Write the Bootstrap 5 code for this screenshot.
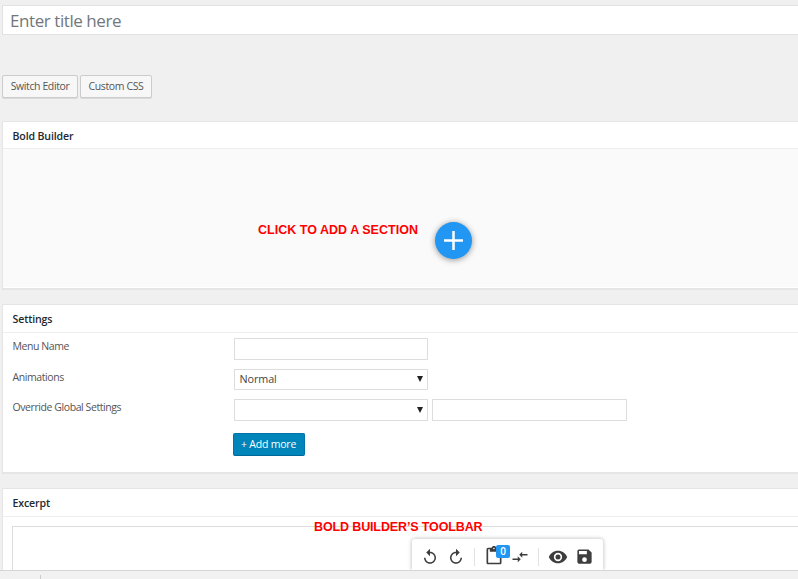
<!DOCTYPE html>
<html lang="en">
<head>
<meta charset="utf-8">
<meta name="viewport" content="width=device-width, initial-scale=1">
<title>Bold Builder</title>
<link href="https://cdn.jsdelivr.net/npm/bootstrap@5.3.0/dist/css/bootstrap.min.css" rel="stylesheet">
<style>
body{font-family:"Open Sans","Noto Sans",sans-serif;font-size:10.5px;line-height:16px;color:#555;background:#f0f0f0;height:579px;letter-spacing:-.42px}
.page-main{height:570px;padding:5px 0 0 2px}
.title-field{height:30px;min-height:0;border:1px solid #e2e2e2;border-right:0;padding:0 7px;font-size:17px;line-height:28px;letter-spacing:-.43px;color:#72777c}
.title-field::placeholder{color:#72777c}
.tool-row{margin-top:40px;gap:2px}
.tool-row .btn{height:23px;padding:0;font-size:10.5px;line-height:21px;letter-spacing:-.39px;color:#555;background:#f7f7f7;border:1px solid #ccc;border-radius:2px;box-shadow:0 1px 0 #dadada}
.btn-switch{width:76px}.btn-css{width:72px}
.panel{background:#fff;border:1px solid #e5e5e5;border-right:0;box-shadow:0 1px 1px rgba(0,0,0,.04)}
.panel-head{height:28px;border-bottom:1px solid #eee;padding-left:9.5px;line-height:28px;font-size:10.6px;font-weight:600;color:#23282d;letter-spacing:-.15px}
.panel-builder{margin-top:23px;height:168px}
.panel-builder .panel-head{height:27px}
.canvas{height:138px;background:#fafafa;padding-left:255px}
.note{font-family:"Liberation Sans",Arial,sans-serif;font-size:12.5px;line-height:14px;font-weight:700;color:#f00;white-space:nowrap}
.note-add{margin-top:74px;width:177px;letter-spacing:.02px}
.add-btn{width:37px;height:37px;margin-top:73px;background:#2196f3;box-shadow:0 1px 6px rgba(0,0,0,.42)}
.panel-settings{margin-top:15px;height:169px}
.form-area{padding:5px 0 0 9.5px}
.setting{height:30.6px}
.setting-name{width:221px;line-height:17px}
.field{width:194.500px;height:21.500px;min-height:0;border:1px solid #ddd;border-radius:0;padding:0 5px;font-size:10.8px;line-height:20px;letter-spacing:-.1px;color:#444;background:#fff}
.field-caret{width:6px;height:6px;margin-right:-1px}
.add-more{width:72px;height:23px;margin:3px 0 0 220px;padding:0;font-size:10.5px;line-height:21px;letter-spacing:-.2px;color:#fff;background:#0085ba;border:1px solid #0073aa;border-radius:2px;border-bottom-color:#006799}
.panel-excerpt{margin-top:15px;height:82px;border-bottom:0;box-shadow:none}
.excerpt-box{margin:9px 0 0 9px;height:44px;border:1px solid #ddd;border-right:0;border-bottom:0}
.foot{height:9px;border-top:1px solid #d5d5d5;background:#f1f1f1}
.foot-tick{width:1px;height:4px;margin:4px 0 0 40px;background:#ccc}
.note-toolbar{left:314px;top:520px;letter-spacing:-.13px}
.builder-toolbar{left:412px;top:539px;width:191px;height:31px;background:#fff;border-radius:3px 3px 0 0;box-shadow:0 0 4px rgba(0,0,0,.3);clip-path:inset(-6px -6px 0 -6px)}
.builder-toolbar svg{display:block;fill:#3d3d3d;margin-top:4px}
.icon-undo,.icon-clip,.icon-fit{margin-left:9px}
.icon-redo{margin-left:8px}
.builder-toolbar .icon-clip{margin-top:3px}
.icon-fit,.icon-save{margin-left:7px}
.icon-eye{margin-left:9px}
.clip-count{left:496px;top:545px;width:14px;height:13px;background:#2196f3;color:#fff;font-size:10px;line-height:13px;border-radius:2px;letter-spacing:0;font-weight:600}
.divider{width:1px;height:18px;background:#e2e2e2;margin:5px 0 0 9px}
</style>
<script src="https://cdn.jsdelivr.net/npm/bootstrap@5.3.0/dist/js/bootstrap.bundle.min.js"></script>
</head>
<body class="overflow-hidden position-relative">
<main class="page-main">
  <input class="form-control rounded-0 title-field" type="text" placeholder="Enter title here" aria-label="Title">
  <div class="tool-row d-flex">
    <button class="btn btn-switch">Switch Editor</button>
    <button class="btn btn-css">Custom CSS</button>
  </div>
  <section class="panel panel-builder">
    <div class="panel-head">Bold Builder</div>
    <div class="canvas d-flex align-items-start">
      <div class="note note-add">CLICK TO ADD A SECTION</div>
      <button class="add-btn btn rounded-circle border-0 p-0 d-flex align-items-center justify-content-center" aria-label="Add section">
        <svg width="19" height="19" viewBox="0 0 19 19" fill="none" stroke="#fff" stroke-width="2.5"><path d="M9.5 0v19M0 9.5h19"/></svg>
      </button>
    </div>
  </section>
  <section class="panel panel-settings">
    <div class="panel-head">Settings</div>
    <div class="form-area">
      <div class="setting d-flex">
        <div class="setting-name">Menu Name</div>
        <input class="form-control field" type="text" aria-label="Menu Name">
      </div>
      <div class="setting d-flex">
        <div class="setting-name">Animations</div>
        <div class="field d-flex align-items-center justify-content-between"><span>Normal</span><svg class="field-caret" viewBox="0 0 6 6"><path d="M0 0h6L3 6z" fill="#222"/></svg></div>
      </div>
      <div class="setting d-flex">
        <div class="setting-name">Override Global Settings</div>
        <div class="field d-flex align-items-center justify-content-end"><svg class="field-caret" viewBox="0 0 6 6"><path d="M0 0h6L3 6z" fill="#222"/></svg></div>
        <input class="form-control field ms-1" type="text" aria-label="Value">
      </div>
      <button class="btn add-more">+ Add more</button>
    </div>
  </section>
  <section class="panel panel-excerpt">
    <div class="panel-head">Excerpt</div>
    <div class="excerpt-box"></div>
  </section>
</main>
<footer class="foot d-flex"><div class="foot-tick"></div></footer>
<div class="note note-toolbar position-absolute">BOLD BUILDER’S TOOLBAR</div>
<div class="builder-toolbar position-absolute d-flex align-items-center">
  <svg class="icon-undo" width="18" height="18" viewBox="0 0 24 24"><path d="M12 5V1L7 6l5 5V7c3.300 0 6 2.700 6 6s-2.700 6-6 6-6-2.700-6-6H4c0 4.400 3.600 8 8 8s8-3.600 8-8-3.600-8-8-8z"/></svg>
  <svg class="icon-redo" width="18" height="18" viewBox="0 0 24 24"><path d="M12 5V1l5 5-5 5V7c-3.300 0-6 2.700-6 6s2.700 6 6 6 6-2.700 6-6h2c0 4.400-3.600 8-8 8s-8-3.600-8-8 3.600-8 8-8z"/></svg>
  <span class="divider"></span>
  <svg class="icon-clip" width="20" height="20" viewBox="0 0 24 24"><path d="M19 2h-4.200C14.400.800 13.300 0 12 0S9.600.800 9.200 2H5c-1.100 0-2 .900-2 2v16c0 1.100.900 2 2 2h14c1.100 0 2-.900 2-2V4c0-1.100-.900-2-2-2zm-7 0c.600 0 1 .400 1 1s-.400 1-1 1-1-.400-1-1 .400-1 1-1zm7 18H5V4h2v3h10V4h2z"/></svg>
  <svg class="icon-fit" width="18" height="18" viewBox="0 0 24 24"><path d="M9.010 14H2v2h7.010v3L13 15l-3.990-4v3zm5.980-1v-3H22V8h-7.010V5L11 9l3.990 4z"/></svg>
  <span class="divider"></span>
  <svg class="icon-eye" width="20" height="20" viewBox="0 0 24 24"><path d="M12 4.500C7 4.500 2.730 7.610 1 12c1.730 4.390 6 7.500 11 7.500s9.270-3.110 11-7.500c-1.730-4.390-6-7.500-11-7.500zM12 17a5 5 0 1 1 0-10 5 5 0 0 1 0 10zm0-8a3 3 0 1 0 0 6 3 3 0 0 0 0-6z"/></svg>
  <svg class="icon-save" width="19" height="19" viewBox="0 0 24 24"><path d="M17 3H5a2 2 0 0 0-2 2v14c0 1.100.900 2 2 2h14c1.100 0 2-.900 2-2V7l-4-4zm-5 16a3 3 0 1 1 0-6 3 3 0 0 1 0 6zm3-10H5V5h10z"/></svg>
</div>
<span class="clip-count position-absolute text-center">0</span>
</body>
</html>
